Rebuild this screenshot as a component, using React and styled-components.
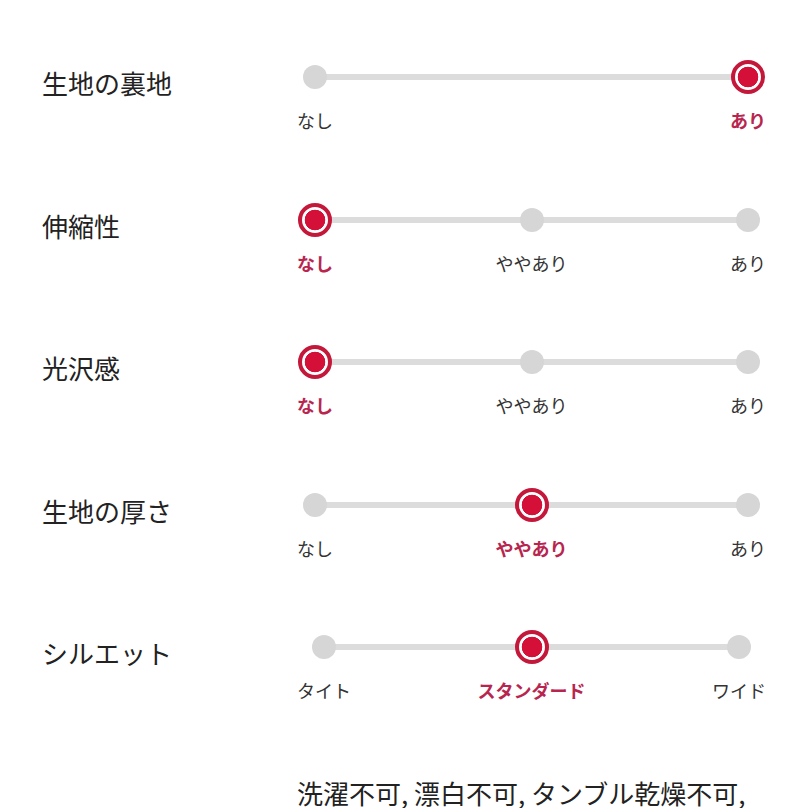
import React from "react"
import styled, { createGlobalStyle } from "styled-components"

const LABEL_SIZE = 18

const attributes = [
    { title: "生地の裏地", options: ["なし", "あり"], selected: 1 },
    { title: "伸縮性", options: ["なし", "ややあり", "あり"], selected: 0 },
    { title: "光沢感", options: ["なし", "ややあり", "あり"], selected: 0 },
    { title: "生地の厚さ", options: ["なし", "ややあり", "あり"], selected: 1 },
    { title: "シルエット", options: ["タイト", "スタンダード", "ワイド"], selected: 1 },
]

function Scale({ options, selected }) {
    const first = options[0].length * LABEL_SIZE / 2
    const last = options[options.length - 1].length * LABEL_SIZE / 2

    return (
        <ScaleBox>
            <Track $left={first} $right={last} />
            {options.map((option, i) => (
                <Point key={option}>
                    <DotSlot>
                        <Dot $active={i === selected} />
                    </DotSlot>
                    <OptionLabel $active={i === selected}>{option}</OptionLabel>
                </Point>
            ))}
        </ScaleBox>
    )
}

function App() {
    return (
        <>
            <GlobalStyle />
            <Page>
                {attributes.map((attr) => (
                    <Row key={attr.title}>
                        <Title>{attr.title}</Title>
                        <Scale options={attr.options} selected={attr.selected} />
                    </Row>
                ))}
                <Row>
                    <CareText>洗濯不可, 漂白不可, タンブル乾燥不可,</CareText>
                </Row>
            </Page>
        </>
    )
}

const GlobalStyle = createGlobalStyle`
    html, body {
        margin: 0;
        padding: 0;
        background: #fff;
        overflow: hidden;
    }
    body {
        font-family: "Noto Sans CJK JP", "Noto Sans", sans-serif;
        color: #222;
    }
`

const Page = styled.main`
    width: 808px;
    padding: 60px 42px 0 42px;
    box-sizing: border-box;
    display: flex;
    flex-direction: column;
    gap: 70.5px;
`

const Row = styled.section`
    display: grid;
    grid-template-columns: 255px 469px;
    align-items: start;
`

const Title = styled.h3`
    margin: 6px 0 0;
    font-size: 26px;
    line-height: 34px;
    font-weight: 400;
    color: #222;
`

const CareText = styled.p`
    grid-column: 2;
    margin: 0;
    font-size: 26px;
    line-height: 40px;
    white-space: nowrap;
    color: #222;
`

const ScaleBox = styled.div`
    position: relative;
    display: flex;
    justify-content: space-between;
`

const Track = styled.div`
    position: absolute;
    top: 14px;
    left: ${(p) => p.$left}px;
    right: ${(p) => p.$right}px;
    height: 6px;
    background: #dcdcdc;
`

const Point = styled.div`
    display: flex;
    flex-direction: column;
    align-items: center;
    gap: 14px;
`

const DotSlot = styled.div`
    height: 34px;
    display: flex;
    align-items: center;
    justify-content: center;
`

const Dot = styled.span`
    display: block;
    position: relative;
    z-index: 1;
    box-sizing: border-box;
    border-radius: 50%;
    width: ${(p) => (p.$active ? "34px" : "24px")};
    height: ${(p) => (p.$active ? "34px" : "24px")};
    background: ${(p) =>
        p.$active
            ? "radial-gradient(circle, #d41038 0 10px, #fff 10.6px)"
            : "#d6d6d6"};
    border: ${(p) => (p.$active ? "4px solid #c4183b" : "none")};
`

const OptionLabel = styled.span`
    font-size: ${LABEL_SIZE}px;
    line-height: 24px;
    white-space: nowrap;
    font-weight: ${(p) => (p.$active ? 700 : 400)};
    color: ${(p) => (p.$active ? "#b8254f" : "#333")};
`

export default App
